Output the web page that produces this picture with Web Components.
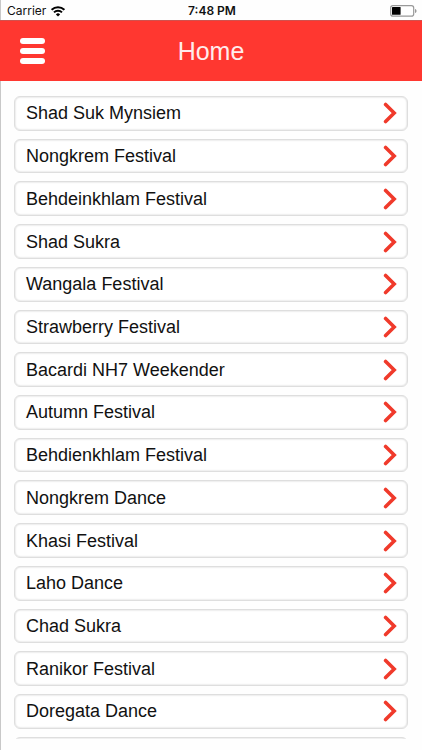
<!DOCTYPE html>
<html lang="en">
<head>
<meta charset="UTF-8">
<meta name="viewport" content="width=device-width, initial-scale=1.0">
<title>Home</title>
<style>
  body {
    margin: 0;
    background: #fefefe;
    font-family: "Liberation Sans", Arial, sans-serif;
    color: #111;
  }
</style>
</head>
<body>
<festival-app>
  <status-bar slot="top" carrier="Carrier" time="7:48 PM"></status-bar>
  <app-header slot="top">Home</app-header>
  <festival-item>Shad Suk Mynsiem</festival-item>
  <festival-item>Nongkrem Festival</festival-item>
  <festival-item>Behdeinkhlam Festival</festival-item>
  <festival-item>Shad Sukra</festival-item>
  <festival-item>Wangala Festival</festival-item>
  <festival-item>Strawberry Festival</festival-item>
  <festival-item>Bacardi NH7 Weekender</festival-item>
  <festival-item>Autumn Festival</festival-item>
  <festival-item>Behdienkhlam Festival</festival-item>
  <festival-item>Nongkrem Dance</festival-item>
  <festival-item>Khasi Festival</festival-item>
  <festival-item>Laho Dance</festival-item>
  <festival-item>Chad Sukra</festival-item>
  <festival-item>Ranikor Festival</festival-item>
  <festival-item>Doregata Dance</festival-item>
  <festival-item></festival-item>
</festival-app>

<script>
class FestivalApp extends HTMLElement {
  connectedCallback() {
    this.attachShadow({ mode: 'open' });
    this.shadowRoot.innerHTML = `
      <style>
        :host {
          display: flex;
          flex-direction: column;
          box-sizing: border-box;
          height: 100vh;
          padding-bottom: 11px;
          border-left: 1px solid #c8c8c8;
        }
        header {
          flex: none;
          margin-left: -1px;
        }
        main {
          flex: 1;
          min-height: 0;
          display: grid;
          /* fifteen rows to a page, with the top edge of the next one showing */
          grid-auto-rows: calc((100% - 122px) / 15);
          gap: 8px;
          margin: 15px 14px 0 13px;
          overflow: hidden;
        }
      </style>
      <header><slot name="top"></slot></header>
      <main><slot></slot></main>
    `;
  }
}
customElements.define('festival-app', FestivalApp);

class StatusBar extends HTMLElement {
  connectedCallback() {
    this.attachShadow({ mode: 'open' });
    this.shadowRoot.innerHTML = `
      <style>
        :host {
          display: grid;
          grid-template-columns: 1fr auto 1fr;
          align-items: center;
          box-sizing: border-box;
          height: 20px;
          padding: 1px 5px 0 7px;
          font: 12px/20px Inter, Roboto, sans-serif;
        }
        .left {
          display: flex;
          align-items: center;
          gap: 5px;
        }
        .time {
          font-weight: 600;
        }
        .battery {
          justify-self: end;
        }
        svg {
          display: block;
        }
      </style>
      <div class="left">
        <span>${this.getAttribute('carrier')}</span>
        <svg width="14" height="11" viewBox="0 0 14 11" fill="none" stroke="#000" stroke-width="2">
          <path d="M0.6 3.8a9 9 0 0 1 12.8 0"/>
          <path d="M3 6.4a5.6 5.6 0 0 1 8 0"/>
          <path d="M7 10.6L4.9 8.4a3 3 0 0 1 4.2 0z" fill="#000" stroke="none"/>
        </svg>
      </div>
      <span class="time">${this.getAttribute('time')}</span>
      <svg class="battery" width="27" height="12" viewBox="0 0 27 12">
        <rect x="0.7" y="0.7" width="23" height="10.4" rx="2.2" fill="#fff" stroke="#999" stroke-width="1.2"/>
        <rect x="2" y="2" width="8.6" height="7.8" rx="0.6" fill="#000"/>
        <path d="M25 4c2 .6 2 3.4 0 4z" fill="#999"/>
      </svg>
    `;
  }
}
customElements.define('status-bar', StatusBar);

class AppHeader extends HTMLElement {
  connectedCallback() {
    this.attachShadow({ mode: 'open' });
    this.shadowRoot.innerHTML = `
      <style>
        :host {
          display: grid;
          grid-template-columns: 1fr auto 1fr;
          align-items: center;
          height: 60px;
          padding: 0 20px;
          background: #ff3730;
          border-top: 1px solid #d0524e;
        }
        button {
          justify-self: start;
          display: grid;
          gap: 4px;
          padding: 0;
          border: 0;
          background: none;
          cursor: pointer;
        }
        button span {
          width: 25px;
          height: 6px;
          border-radius: 3px;
          background: #fff;
        }
        h1 {
          margin: 0;
          font-size: 25px;
          line-height: 30px;
          font-weight: 400;
          color: #ffecec;
        }
      </style>
      <button type="button" aria-label="Menu"><span></span><span></span><span></span></button>
      <h1><slot></slot></h1>
    `;
  }
}
customElements.define('app-header', AppHeader);

class FestivalItem extends HTMLElement {
  connectedCallback() {
    this.attachShadow({ mode: 'open' });
    this.shadowRoot.innerHTML = `
      <style>
        :host {
          display: block;
          min-height: 0;
        }
        button {
          display: flex;
          align-items: center;
          justify-content: space-between;
          box-sizing: border-box;
          width: 100%;
          height: 100%;
          padding: 0 10px 0 11px;
          border: 1px solid #dedede;
          border-radius: 6px;
          background: #fff;
          box-shadow: inset 0 0 2px #c4c4c4;
          font: inherit;
          font-size: 18px;
          line-height: 22px;
          color: inherit;
          text-align: left;
          cursor: pointer;
        }
        svg {
          flex: none;
        }
      </style>
      <button type="button">
        <span><slot></slot></span>
        <svg width="14" height="22" viewBox="0 0 14 22" fill="none" stroke="#f03a2b" stroke-width="3.6" stroke-linecap="round" aria-hidden="true">
          <path d="M2.6 2.4L11.2 11L2.6 19.6"/>
        </svg>
      </button>
    `;
  }
}
customElements.define('festival-item', FestivalItem);
</script>
</body>
</html>
